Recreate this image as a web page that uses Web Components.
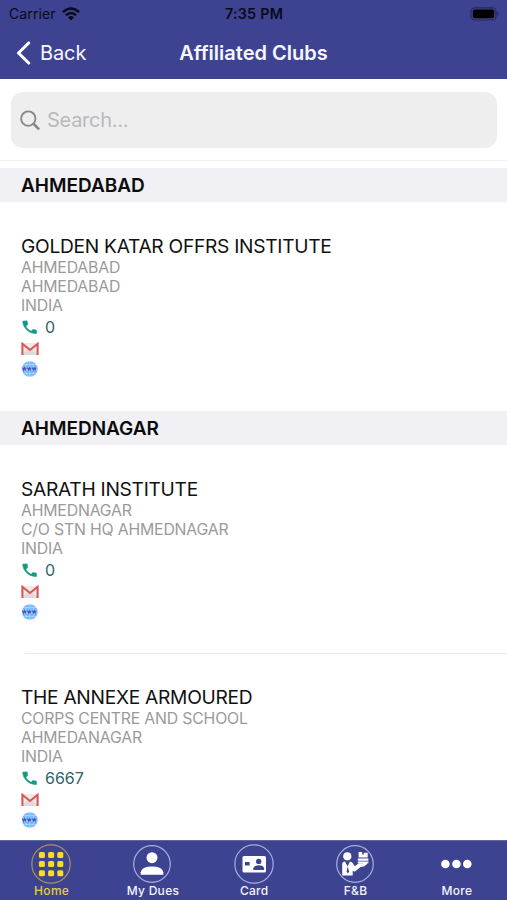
<!DOCTYPE html>
<html lang="en">
<head>
<meta charset="utf-8">
<title>Affiliated Clubs</title>
<style>
body{margin:0;background:#fff;font-family:Inter,"Liberation Sans",sans-serif}
</style>
</head>
<body>
<clubs-app></clubs-app>
<script>
function define(name, html, setup) {
  customElements.define(name, class extends HTMLElement {
    connectedCallback() {
      if (this.shadowRoot) return;
      const root = this.attachShadow({mode: 'open'});
      root.innerHTML = html;
      if (setup) setup(this, root);
    }
  });
}

define('status-bar', `<style>
:host{display:grid;grid-template-columns:1fr auto 1fr;align-items:center;height:27px;padding:0 8px 0 9px;box-sizing:border-box;color:#080a18;font-size:14px;line-height:27px}
.l{display:flex;align-items:center;gap:6px;letter-spacing:.12px}
.t{font-weight:600;letter-spacing:.25px;font-size:14.3px}
.r{display:flex;justify-content:flex-end}
svg{display:block}
</style>
<div class="l"><span>Carrier</span><svg width="18" height="14" viewBox="0 0 18 14"><g fill="none" stroke="#080a18" stroke-width="2.5"><path d="M1 5.2Q9-2.2 17 5.2"/><path d="M3.9 8.3Q9 3.7 14.1 8.3"/></g><path d="M6 10.3Q9 7.7 12 10.3L9 13.5Z" fill="#080a18"/></svg></div>
<span class="t">7:35 PM</span>
<div class="r"><svg width="29" height="14" viewBox="0 0 29 14"><rect x="1" y=".8" width="25" height="12.2" rx="3.6" fill="none" stroke="#26295d" stroke-width="1.2"/><rect x="2.8" y="2.6" width="21.4" height="8.6" rx="2" fill="#000"/><path d="M27.2 4.8q1.4.6 1.4 2.1t-1.4 2.1z" fill="#26295d"/></svg></div>`);

define('nav-bar', `<style>
:host{display:grid;grid-template-columns:1fr auto 1fr;align-items:center;height:51px;padding:0 16px;color:#f7f7ff}
.b{display:flex;align-items:center;gap:9px;font-size:20px;letter-spacing:-.1px}
.t{font-weight:600;font-size:20px;letter-spacing:0}
svg{display:block}
</style>
<div class="b"><svg width="15" height="24" viewBox="0 0 15 24"><path d="M12.7 2 2.5 12l10.2 10" fill="none" stroke="#fff" stroke-width="3.1" stroke-linecap="round" stroke-linejoin="round"/></svg><span>Back</span></div>
<span class="t"><slot></slot></span>`);

define('search-field', `<style>
:host{display:block;padding:12.5px 10px 12px 11px;border-bottom:1px solid #efeff0}
div{display:flex;align-items:center;gap:7px;height:56px;border-radius:12px;background:#eee;padding-left:9px;color:#b9b9bd;font-size:20px;letter-spacing:-.28px}
svg,span{margin-top:1px}
</style>
<div><svg width="20" height="21" viewBox="0 0 20 21" fill="none" stroke="#858588"><circle cx="8.3" cy="8.6" r="7.2" stroke-width="1.8"/><path d="m13.7 14 5.4 5.4" stroke-width="2.5"/></svg><span><slot></slot></span></div>`);

define('club-section', `<style>
:host{display:block}
h2{margin:0;height:34px;line-height:36px;padding-left:21px;background:#f0f0f5;color:#0b0b0c;font-size:19px;font-weight:600;letter-spacing:-.02px}
</style><h2></h2><slot></slot>`, (host, root) => {
  root.querySelector('h2').textContent = host.getAttribute('name');
});

define('club-card', `<style>
:host{display:block;height:209px;padding:32px 0 0 21px;box-sizing:border-box;position:relative}
:host([divided]){height:208px}
:host([divided])::after{content:"";position:absolute;left:25px;right:0;bottom:-1px;height:1px;background:#eaeaec}
h3{margin:0;font-size:19.2px;font-weight:400;line-height:25px;height:24px;letter-spacing:-.29px;color:#111;white-space:nowrap}
.s{color:#9a9a9c;font-size:15.8px;line-height:19.1px;letter-spacing:-.18px;white-space:nowrap}
.row{display:flex;align-items:center;gap:6px;height:21.2px;color:#2f6266;font-size:16px}
.p{margin-top:1px}
.m svg{margin-top:1px}
svg{display:block}
</style>
<h3></h3>
<div class="s"><slot></slot></div>
<div class="row p"><svg width="18" height="18" viewBox="0 0 18 18"><path d="M2.2 3.1 5.5 2.8Q6.3 2.8 6.4 3.6L6.7 6.1Q6.8 6.6 6.4 7L4.9 8.4Q7 11.9 10.1 13.2L11.6 11.6Q12 11.3 12.5 11.4L15 11.9Q15.6 12 15.6 12.7V15Q15.6 15.8 14.7 15.7Q8.4 15.4 5 11.3Q1.8 7.4 1.6 3.9Q1.6 3.2 2.2 3.1Z" fill="#139a83" stroke="#139a83" stroke-width=".4"/></svg><span class="n"></span></div>
<div class="row m"><svg width="18" height="14" viewBox="0 0 18 14"><path d="M1 1h16v12H1z" fill="#eeeae8"/><path d="m1 13 6-6 2 1.5L11 7l6 6z" fill="#dedad8"/><path d="M1.4 13V1.8L9 8l7.6-6.2V13" fill="none" stroke="#dc5654" stroke-width="2.1"/></svg></div>
<div class="row"><svg width="18" height="18" viewBox="0 0 18 18"><circle cx="8.8" cy="9" r="7.8" fill="#68b2fa"/><g fill="none" stroke="#c5e4ff" stroke-width=".7"><path d="M8.8 1v16M2.5 4.7h12.6M2.5 13.3h12.6"/><ellipse cx="8.8" cy="9" rx="4.3" ry="7.7"/></g><path d="M.8 6.7h16v4.2H.8z" fill="#a0cbfa"/><path d="m1.6 7.5.9 2.4.9-2.2.9 2.2.9-2.4m1.3 0 .9 2.4.9-2.2.9 2.2.9-2.4m1.3 0 .9 2.4.9-2.2.9 2.2.9-2.4" fill="none" stroke="#4655b8" stroke-width="1.1"/></svg></div>`, (host, root) => {
  root.querySelector('h3').textContent = host.getAttribute('name');
  root.querySelector('.n').textContent = host.getAttribute('phone');
});

define('address-line', `<style>:host{display:block}</style><slot></slot>`);

const ring = '<circle cx="20" cy="20" r="18.3" fill="none" stroke="#a9aedf" stroke-width="1.2"/>';
const icons = {
  home: '<circle cx="20" cy="20" r="19.2" fill="none" stroke="#a99262" stroke-width="1.2"/><g fill="#fadc20">' +
    [7.9, 17.1, 26.3].map(y => [7.9, 17.1, 26.3].map(x => `<rect x="${x}" y="${y}" width="6" height="6" rx="1.5"/>`).join('')).join('') + '</g>',
  dues: ring + '<g fill="#fff"><circle cx="20" cy="13.7" r="5.5"/><path d="M8.7 30.7v-2.5Q9.5 22.4 20 22.4t11.3 5.8v2.5z"/></g>',
  card: '<circle cx="20" cy="20" r="19.2" fill="none" stroke="#a9aedf" stroke-width="1.2"/><rect x="8.5" y="12" width="23.5" height="16.5" rx="1.6" fill="#fff"/><g fill="#3e4391"><path d="M11 18h4.6v3.5H11z"/><circle cx="24.7" cy="17.4" r="2.7"/><path d="M19.3 25.9v-1.4q.5-3.2 5.4-3.2t5.4 3.2v1.4z"/></g>',
  food: ring + '<g fill="#fff"><circle cx="12.3" cy="12.3" r="4.1"/><path d="M7.2 31.5V20.4q0-3 2.8-3l2.7 5.2 2.2-5.2q1.7.1 2.5 1.4l2.4 3.4 4-3h3.4l4.6-.8.6 1.4-3.4 2.6-3.4.5-5.4 4.3q-1.4.8-2.5-.4v4.7z"/><path d="M22.8 14.5h10.6v2.2H22.8zM22.8 17.5h10.6v1.8H22.8zM23.6 8.1h3.6v2.4h1.6V8.8h3.9v4.8h-9.1z"/></g><path d="m12.7 22.4-1.1 5 1.3 2.2 1.2-2.2z" fill="#3e4391"/>',
  more: '<g fill="#fff"><circle cx="9.4" cy="20" r="4.3"/><circle cx="20.4" cy="20" r="4.3"/><circle cx="31.3" cy="20" r="4.3"/></g>'
};
define('tab-item', `<style>
:host{display:flex;flex:1;flex-direction:column;align-items:center;color:#f4f4ff;font-size:12px;font-weight:500;letter-spacing:.3px;line-height:14px;padding-top:2.5px}
:host([active]){color:#e4ce45}
svg{display:block}
span{padding-left:1px}
</style><svg width="40" height="40" viewBox="0 0 40 40"></svg><span><slot></slot></span>`, (host, root) => {
  root.querySelector('svg').innerHTML = icons[host.getAttribute('icon')];
});
define('tab-bar', `<style>
:host{display:flex;height:60px;box-sizing:border-box;background:#3e4391;border-top:1px solid #62669f;padding-left:.5px}
</style><slot></slot>`);

define('clubs-app', `<style>
:host{display:flex;flex-direction:column;height:900px;overflow:hidden;background:#fff}
header{height:79px;background:#3e4391;flex:none}
main{flex:1;min-height:0;overflow:hidden}
.list{padding-top:7.5px}
tab-bar{flex:none}
</style>
<header><status-bar></status-bar><nav-bar>Affiliated Clubs</nav-bar></header>
<main><search-field>Search...</search-field>
<div class="list">
<club-section name="AHMEDABAD"><club-card name="GOLDEN KATAR OFFRS INSTITUTE" phone="0"><address-line>AHMEDABAD</address-line><address-line>AHMEDABAD</address-line><address-line>INDIA</address-line></club-card></club-section>
<club-section name="AHMEDNAGAR"><club-card divided name="SARATH INSTITUTE" phone="0"><address-line>AHMEDNAGAR</address-line><address-line>C/O STN HQ AHMEDNAGAR</address-line><address-line>INDIA</address-line></club-card>
<club-card name="THE ANNEXE ARMOURED" phone="6667"><address-line>CORPS CENTRE AND SCHOOL</address-line><address-line>AHMEDANAGAR</address-line><address-line>INDIA</address-line></club-card></club-section>
</div></main>
<tab-bar><tab-item icon="home" active>Home</tab-item><tab-item icon="dues">My Dues</tab-item><tab-item icon="card">Card</tab-item><tab-item icon="food">F&amp;B</tab-item><tab-item icon="more">More</tab-item></tab-bar>`);
</script>
</body>
</html>
